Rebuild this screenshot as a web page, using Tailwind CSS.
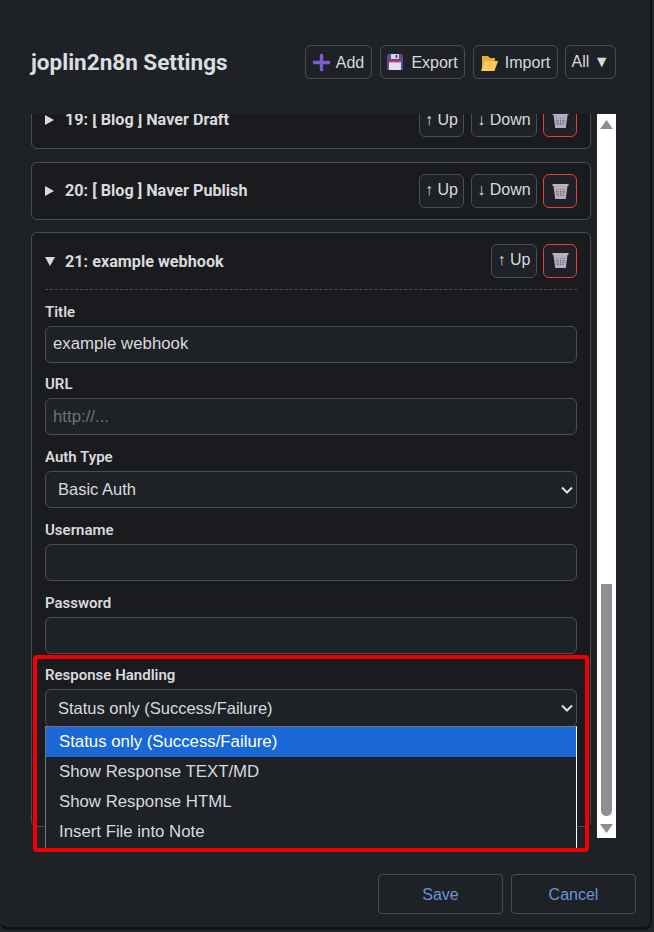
<!DOCTYPE html>
<html lang="en">
<head>
    <meta charset="UTF-8">
    <meta name="viewport" content="width=device-width, initial-scale=1.0">
    <title>joplin2n8n Settings</title>
    <script src="https://cdn.jsdelivr.net/npm/@tailwindcss/browser@4"></script>
</head>
<body class="bg-[#8b7f73] font-['Liberation_Sans',sans-serif]">
    <div class="relative w-[654px] h-[932px] overflow-hidden bg-[#23262b]">
        <div class="relative flex flex-col w-[652px] h-[930px] bg-[#1e2126] rounded-b-lg border-b-[3px] border-r-2 border-[#111214] text-[#d9dadc]">

            <!-- header -->
            <header class="flex items-start justify-between h-[114px] shrink-0 pl-[31px] pr-[34px] pt-[45px]">
                <h1 class="font-['Roboto',sans-serif] text-[22.5px] leading-[34px] font-bold text-[#dcdde0]">joplin2n8n Settings</h1>
                <div class="flex gap-2">
                    <button class="flex items-center justify-center gap-[6px] w-[67px] h-[34px] pt-[2px] rounded-md border border-[#4a4d52] text-[16px]">
                        <svg class="w-[17px] h-[17px] -mt-[2px]" viewBox="0 0 17 17"><path d="M6.800 0h3.400v6.800H17v3.400h-6.800V17H6.800v-6.800H0V6.800h6.800z" fill="#7a5bc9"/></svg>Add
                    </button>
                    <button class="flex items-center justify-center gap-[8px] w-[85px] h-[34px] pt-[2px] rounded-md border border-[#4a4d52] text-[16px]">
                        <svg class="w-[16px] h-[16px] -mt-[2px]" viewBox="0 0 16 16"><path d="M0 1.500 1.500 0h13L16 1.500V16H0z" fill="#5c4a8f"/><rect x="4" y="0" width="8" height="5" fill="#d9d3e8"/><rect x="8.500" y="1" width="2" height="3" fill="#5c4a8f"/><rect x="2" y="7" width="12" height="9" fill="#e4dcef"/><rect x="2" y="7" width="12" height="1.500" fill="#e0405a"/></svg>Export
                    </button>
                    <button class="flex items-center justify-center gap-[7px] w-[85px] h-[34px] pt-[2px] rounded-md border border-[#4a4d52] text-[16px]">
                        <svg class="w-[17px] h-[15px]" viewBox="0 0 17 15"><path d="M1 0h6l2 2h5v3H4L1 13z" fill="#e8a93a"/><path d="M3.500 5H17l-3.500 10H0z" fill="#fdc95a"/></svg>Import
                    </button>
                    <button class="w-[51px] h-[34px] -ml-px rounded-md border border-[#4a4d52] text-[16px]">All ▼</button>
                </div>
            </header>

            <!-- scrolled list -->
            <div class="relative flex ml-[31px] w-[585px] h-[724px] shrink-0 overflow-hidden">
                <div class="w-[560px] shrink-0 mr-[6px] -mt-[23px] flex flex-col gap-[12px]">
                    <section class="h-[58px] mb-px shrink-0 flex items-center px-[13px] bg-[#1a1b1f] border border-[#4a4d52] rounded-md">
                        <svg class="w-[20px] h-[10px] shrink-0" viewBox="0 0 20 10"><path d="M0 0l9 5-9 5z" fill="#d9dadc"/></svg>
                        <span class="flex-1 font-['Roboto',sans-serif] text-[16.200px] font-bold">19: [ Blog ] Naver Draft</span>
                        <div class="flex">
                            <button class="w-[45px] h-[34px] mr-[7px] rounded-md border border-[#4a4d52] bg-[#1e2126] text-[16px] pb-px">↑ Up</button>
                            <button class="w-[66px] h-[34px] mr-[6px] rounded-md border border-[#4a4d52] bg-[#1e2126] text-[16px] pb-px">↓ Down</button>
                            <button class="flex items-center justify-center w-[34px] h-[34px] rounded-md border border-[#e53e3e] bg-[#1e2126]">
                                <svg class="w-[17px] h-[17px]" viewBox="0 0 17 17"><rect x="0.500" y="1" width="16" height="2" fill="#b9b4c4"/><path d="M1.500 3h14L13.800 16H3.200z" fill="#b3aebf"/><path d="M5 6l1 8M8.500 6v8M12 6l-1 8M4 9h9M4.500 12h8" stroke="#6f6b79" stroke-width="1" stroke-dasharray="1 1"/></svg>
                            </button>
                        </div>
                    </section>
                    <section class="h-[58px] shrink-0 flex items-center px-[13px] bg-[#1a1b1f] border border-[#4a4d52] rounded-md">
                        <svg class="w-[20px] h-[10px] shrink-0" viewBox="0 0 20 10"><path d="M0 0l9 5-9 5z" fill="#d9dadc"/></svg>
                        <span class="flex-1 font-['Roboto',sans-serif] text-[16.200px] font-bold">20: [ Blog ] Naver Publish</span>
                        <div class="flex">
                            <button class="w-[45px] h-[34px] mr-[7px] rounded-md border border-[#4a4d52] bg-[#1e2126] text-[16px] pb-[2px]">↑ Up</button>
                            <button class="w-[66px] h-[34px] mr-[6px] rounded-md border border-[#4a4d52] bg-[#1e2126] text-[16px] pb-[2px]">↓ Down</button>
                            <button class="flex items-center justify-center w-[34px] h-[34px] rounded-md border border-[#e53e3e] bg-[#1e2126]">
                                <svg class="w-[17px] h-[17px]" viewBox="0 0 17 17"><rect x="0.500" y="1" width="16" height="2" fill="#b9b4c4"/><path d="M1.500 3h14L13.800 16H3.200z" fill="#b3aebf"/><path d="M5 6l1 8M8.500 6v8M12 6l-1 8M4 9h9M4.500 12h8" stroke="#6f6b79" stroke-width="1" stroke-dasharray="1 1"/></svg>
                            </button>
                        </div>
                    </section>
                    <section class="h-[595px] shrink-0 px-[13px] bg-[#1a1b1f] border border-[#4a4d52] rounded-md">
                        <div class="flex items-center h-[57px] border-b border-dashed border-[#4a4d52]">
                            <svg class="w-[20px] h-[9px] shrink-0" viewBox="0 0 20 9"><path d="M0 0h10L5 9z" fill="#d9dadc"/></svg>
                            <span class="flex-1 pt-[2px] font-['Roboto',sans-serif] text-[16.200px] font-bold">21: example webhook</span>
                            <div class="flex gap-[6px] mb-[1px]">
                                <button class="w-[46px] h-[34px] rounded-md border border-[#4a4d52] bg-[#1e2126] text-[16px] pb-[2px]">↑ Up</button>
                                <button class="flex items-center justify-center w-[34px] h-[34px] rounded-md border border-[#e53e3e] bg-[#1e2126]">
                                    <svg class="w-[17px] h-[17px]" viewBox="0 0 17 17"><rect x="0.500" y="1" width="16" height="2" fill="#b9b4c4"/><path d="M1.500 3h14L13.800 16H3.200z" fill="#b3aebf"/><path d="M5 6l1 8M8.500 6v8M12 6l-1 8M4 9h9M4.500 12h8" stroke="#6f6b79" stroke-width="1" stroke-dasharray="1 1"/></svg>
                                </button>
                            </div>
                        </div>
                        <div class="flex flex-col gap-[13.800px] pt-[13.500px]">
                            <div>
                                <label class="block font-['Roboto',sans-serif] text-[15px] leading-[16px] mb-[6px] font-semibold">Title</label>
                                <div class="h-[37px] flex items-center px-[7px] rounded-md border border-[#4a4d52] bg-[#1e2126] text-[16.800px] pb-px">example webhook</div>
                            </div>
                            <div>
                                <label class="block font-['Roboto',sans-serif] text-[15px] leading-[16px] mb-[6px] font-semibold">URL</label>
                                <div class="h-[37px] flex items-center px-[7px] rounded-md border border-[#4a4d52] bg-[#1e2126] text-[16.800px] text-[#6f7278] pb-px">http://...</div>
                            </div>
                            <div>
                                <label class="block font-['Roboto',sans-serif] text-[15px] leading-[16px] mb-[6px] font-semibold">Auth Type</label>
                                <div class="h-[37px] flex items-center justify-between pl-[12px] pr-[3px] rounded-md border border-[#4a4d52] bg-[#1e2126] text-[16.500px]">Basic Auth
                                    <svg class="w-[12px] h-[8px]" viewBox="0 0 12 8"><path d="M1 1.500 6 6.500l5-5" fill="none" stroke="#e0e0e0" stroke-width="2"/></svg>
                                </div>
                            </div>
                            <div>
                                <label class="block font-['Roboto',sans-serif] text-[15px] leading-[16px] mb-[6px] font-semibold">Username</label>
                                <div class="h-[37px] rounded-md border border-[#4a4d52] bg-[#1e2126]"></div>
                            </div>
                            <div>
                                <label class="block font-['Roboto',sans-serif] text-[15px] leading-[16px] mb-[6px] font-semibold">Password</label>
                                <div class="h-[37px] rounded-md border border-[#4a4d52] bg-[#1e2126]"></div>
                            </div>
                            <div>
                                <label class="block font-['Roboto',sans-serif] text-[15px] leading-[16px] mb-[6px] font-semibold">Response Handling</label>
                                <div class="h-[38px] flex items-center justify-between pl-[12px] pr-[3px] rounded-md border border-[#4a4d52] bg-[#1e2126] text-[16.500px]">Status only (Success/Failure)
                                    <svg class="w-[12px] h-[8px]" viewBox="0 0 12 8"><path d="M1 1.500 6 6.500l5-5" fill="none" stroke="#e0e0e0" stroke-width="2"/></svg>
                                </div>
                            </div>
                        </div>
                    </section>
                </div>

                <!-- scrollbar -->
                <div class="relative w-[19px] shrink-0 bg-white">
                    <svg class="absolute left-[3px] top-[6px] w-[13px] h-[9px]" viewBox="0 0 13 9"><path d="M6.500 0 13 9H0z" fill="#8f8f8f"/></svg>
                    <div class="absolute left-[4px] top-[470px] w-[11px] h-[232px] rounded-b-md bg-[#8f8f8f]"></div>
                    <svg class="absolute left-[3px] bottom-[5px] w-[13px] h-[9px]" viewBox="0 0 13 9"><path d="M0 0h13L6.500 9z" fill="#8f8f8f"/></svg>
                </div>
            </div>

            <!-- footer -->
            <footer class="flex justify-end gap-2 pr-[14px] pt-[36px]">
                <button class="w-[125px] h-[40px] pt-px rounded border border-[#4a4d52] text-[16px] text-[#6d93d6]">Save</button>
                <button class="w-[125px] h-[40px] pt-px rounded border border-[#4a4d52] text-[16px] text-[#6d93d6]">Cancel</button>
            </footer>

            <!-- open select menu -->
            <ul class="absolute left-[45px] top-[726px] w-[532px] h-[124px] overflow-hidden bg-[#1e2126] border-t border-l border-[#767676] border-r border-r-white text-[16.800px] leading-[30px]">
                <li class="pl-[13px] h-[30px] bg-[#1a68d6] text-white">Status only (Success/Failure)</li>
                <li class="pl-[13px] h-[30px]">Show Response TEXT/MD</li>
                <li class="pl-[13px] h-[30px]">Show Response HTML</li>
                <li class="pl-[13px] h-[30px]">Insert File into Note</li>
            </ul>

            <!-- red annotation -->
            <div class="absolute left-[33px] top-[655px] w-[556px] h-[197px] rounded border-[4px] border-[#f00000] pointer-events-none"></div>
        </div>
    </div>
</body>
</html>
